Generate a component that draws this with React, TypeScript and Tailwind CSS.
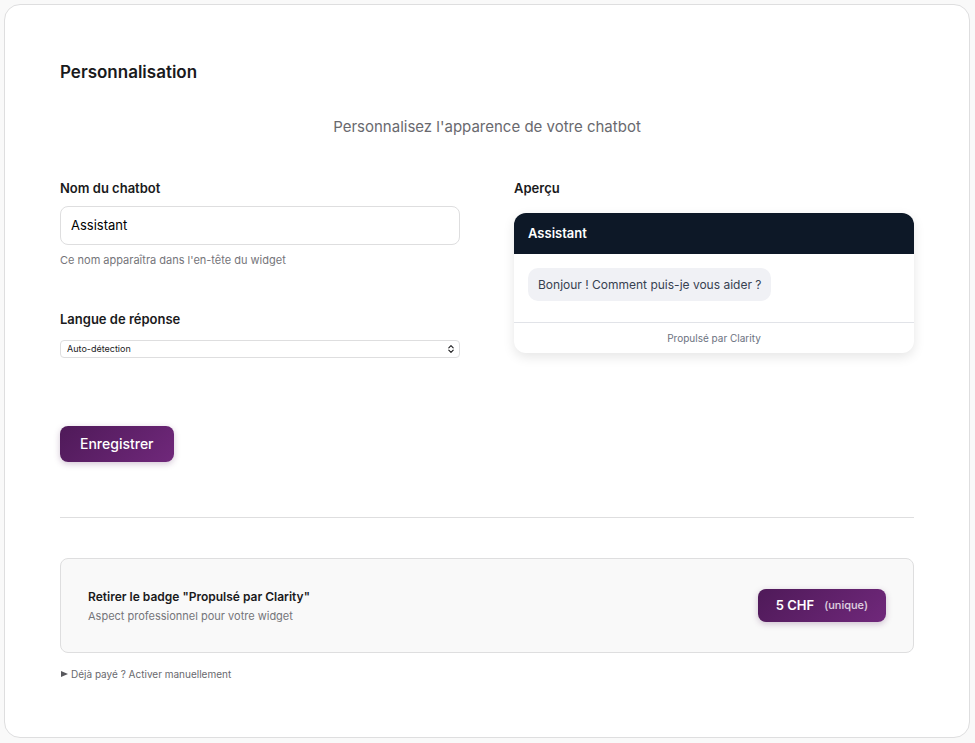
import React, { useState } from "react";

interface FieldLabelProps {
  htmlFor: string;
  children: React.ReactNode;
}

const FieldLabel: React.FC<FieldLabelProps> = ({ htmlFor, children }) => (
  <label htmlFor={htmlFor} className="block text-[13px] leading-5 font-semibold text-[#1a1a1c]">
    {children}
  </label>
);

const WidgetPreview: React.FC<{ name: string }> = ({ name }) => (
  <div className="mt-[15px] rounded-xl overflow-hidden bg-white shadow-[0_4px_12px_rgba(0,0,0,0.1)]">
    <div className="bg-[#0d1827] px-3.5 py-2.5 text-[13px] leading-[21px] font-semibold text-white">
      {name}
    </div>
    <div className="px-3.5 pt-3.5 pb-[21px] flex">
      <p className="bg-[#f0f1f5] rounded-[10px] px-2.5 py-2 text-xs leading-[17px] text-[#374151]">
        Bonjour ! Comment puis-je vous aider ?
      </p>
    </div>
    <div className="border-t border-[#e1e3e8] py-[7px] text-center text-[10px] leading-4 text-[#6b7280]">
      Propulsé par Clarity
    </div>
  </div>
);

export default function App() {
  const [name, setName] = useState("Assistant");
  const [language, setLanguage] = useState("auto");

  return (
    <div className="min-h-screen bg-[#f9f9f9] pt-1 pb-[5px] pl-1 pr-[5px] font-['Inter',sans-serif] text-[#1a1a1c]">
      <main className="bg-white border border-[#dededf] rounded-2xl p-[55px]">
        <h2 className="text-[17px] leading-6 font-semibold">Personnalisation</h2>
        <p className="mt-[31px] text-center text-[15px] leading-6 text-[#69696e]">
          Personnalisez l'apparence de votre chatbot
        </p>

        <form onSubmit={(e) => e.preventDefault()}>
          <div className="mt-[39px] grid grid-cols-2 gap-[54px]">
            <div>
              <FieldLabel htmlFor="bot-name">Nom du chatbot</FieldLabel>
              <input
                id="bot-name"
                type="text"
                value={name}
                onChange={(e) => setName(e.target.value)}
                className="mt-2 block w-full h-[39px] rounded-lg border border-[#dededf] bg-white px-2.5 pb-0.5 text-[13px] text-black outline-none"
              />
              <p className="mt-[7px] mb-[41px] text-[11px] leading-4 text-[#75757a]">
                Ce nom apparaîtra dans l'en-tête du widget
              </p>

              <FieldLabel htmlFor="bot-language">Langue de réponse</FieldLabel>
              <div className="relative mt-[11px]">
                <select
                  id="bot-language"
                  value={language}
                  onChange={(e) => setLanguage(e.target.value)}
                  className="block w-full h-[18px] appearance-none rounded-[4px] border border-[#dededf] bg-white px-1.5 text-[9px] leading-4 text-[#1a1a1c] outline-none"
                >
                  <option value="auto">Auto-détection</option>
                  <option value="fr">Français</option>
                  <option value="de">Deutsch</option>
                  <option value="en">English</option>
                </select>
                <svg
                  viewBox="0 0 6 8"
                  className="absolute right-1.5 top-[5px] w-1.5 h-2 pointer-events-none"
                  fill="none"
                  stroke="#1a1a1c"
                  strokeWidth="1.1"
                  strokeLinecap="round"
                  strokeLinejoin="round"
                >
                  <path d="M.8 2.800 3 .7l2.200 2.100M.8 5.200 3 7.300l2.200-2.100" />
                </svg>
              </div>
            </div>

            <div>
              <h3 className="text-[13px] leading-5 font-semibold">Aperçu</h3>
              <WidgetPreview name={name} />
            </div>
          </div>

          <button
            type="submit"
            className="mt-[68px] block h-9 rounded-lg bg-linear-135 from-[#4f1a59] to-[#70287b] px-5 text-sm font-medium text-white shadow-[0_2px_6px_rgba(79,26,89,0.25)]"
          >
            Enregistrer
          </button>
        </form>

        <hr className="mt-[55px] border-[#dededf]" />

        <section className="mt-10 flex items-center justify-between gap-4 rounded-lg border border-[#dededf] bg-[#f9f9f9] p-[27px]">
          <div className="pt-px">
            <h3 className="text-xs leading-5 font-semibold">Retirer le badge "Propulsé par Clarity"</h3>
            <p className="text-[11px] leading-[18px] text-[#75757a]">Aspect professionnel pour votre widget</p>
          </div>
          <button
            type="button"
            className="flex items-center gap-2.5 h-[33px] rounded-lg bg-linear-135 from-[#4f1a59] to-[#70287b] px-[18px] text-[13px] font-semibold text-white shadow-[0_2px_6px_rgba(79,26,89,0.25)]"
          >
            5 CHF
            <span className="text-[11px] font-medium text-white/80">(unique)</span>
          </button>
        </section>

        <details className="group mt-[13px] text-[10px] leading-4 text-[#69696e]">
          <summary className="flex w-fit items-center gap-[3px] pl-px list-none cursor-pointer">
            <svg viewBox="0 0 7 6" className="w-[7px] h-1.5 fill-[#58585d] group-open:rotate-90">
              <path d="M0 0v6l7-3z" />
            </svg>
            Déjà payé ? Activer manuellement
          </summary>
        </details>
      </main>
    </div>
  );
}
